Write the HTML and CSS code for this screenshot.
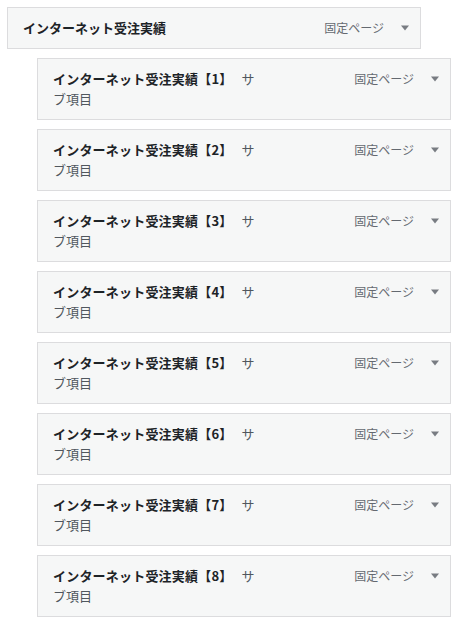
FILE: index.html
```html
<!DOCTYPE html>
<html lang="ja">
<head>
<meta charset="utf-8">
<title>メニュー</title>
<link rel="stylesheet" href="styles.css">
</head>
<body>
<ul class="menu">
  <li class="item">
    <div class="handle">
      <span class="title">インターネット受注実績</span>
      <span class="controls"><span class="type">固定ページ</span><span class="edit"><svg width="10" height="6" viewBox="0 0 10 6"><path d="M1 0.5h8L5 5.5z" fill="#787c82"/></svg></span></span>
    </div>
  </li>
  <li class="item sub">
    <div class="handle">
      <span class="title"><span class="name">インターネット受注実績【1】</span> <span class="is-sub">サブ項目</span></span>
      <span class="controls"><span class="type">固定ページ</span><span class="edit"><svg width="10" height="6" viewBox="0 0 10 6"><path d="M1 0.5h8L5 5.5z" fill="#787c82"/></svg></span></span>
    </div>
  </li>
  <li class="item sub">
    <div class="handle">
      <span class="title"><span class="name">インターネット受注実績【2】</span> <span class="is-sub">サブ項目</span></span>
      <span class="controls"><span class="type">固定ページ</span><span class="edit"><svg width="10" height="6" viewBox="0 0 10 6"><path d="M1 0.5h8L5 5.5z" fill="#787c82"/></svg></span></span>
    </div>
  </li>
  <li class="item sub">
    <div class="handle">
      <span class="title"><span class="name">インターネット受注実績【3】</span> <span class="is-sub">サブ項目</span></span>
      <span class="controls"><span class="type">固定ページ</span><span class="edit"><svg width="10" height="6" viewBox="0 0 10 6"><path d="M1 0.5h8L5 5.5z" fill="#787c82"/></svg></span></span>
    </div>
  </li>
  <li class="item sub">
    <div class="handle">
      <span class="title"><span class="name">インターネット受注実績【4】</span> <span class="is-sub">サブ項目</span></span>
      <span class="controls"><span class="type">固定ページ</span><span class="edit"><svg width="10" height="6" viewBox="0 0 10 6"><path d="M1 0.5h8L5 5.5z" fill="#787c82"/></svg></span></span>
    </div>
  </li>
  <li class="item sub">
    <div class="handle">
      <span class="title"><span class="name">インターネット受注実績【5】</span> <span class="is-sub">サブ項目</span></span>
      <span class="controls"><span class="type">固定ページ</span><span class="edit"><svg width="10" height="6" viewBox="0 0 10 6"><path d="M1 0.5h8L5 5.5z" fill="#787c82"/></svg></span></span>
    </div>
  </li>
  <li class="item sub">
    <div class="handle">
      <span class="title"><span class="name">インターネット受注実績【6】</span> <span class="is-sub">サブ項目</span></span>
      <span class="controls"><span class="type">固定ページ</span><span class="edit"><svg width="10" height="6" viewBox="0 0 10 6"><path d="M1 0.5h8L5 5.5z" fill="#787c82"/></svg></span></span>
    </div>
  </li>
  <li class="item sub">
    <div class="handle">
      <span class="title"><span class="name">インターネット受注実績【7】</span> <span class="is-sub">サブ項目</span></span>
      <span class="controls"><span class="type">固定ページ</span><span class="edit"><svg width="10" height="6" viewBox="0 0 10 6"><path d="M1 0.5h8L5 5.5z" fill="#787c82"/></svg></span></span>
    </div>
  </li>
  <li class="item sub">
    <div class="handle">
      <span class="title"><span class="name">インターネット受注実績【8】</span> <span class="is-sub">サブ項目</span></span>
      <span class="controls"><span class="type">固定ページ</span><span class="edit"><svg width="10" height="6" viewBox="0 0 10 6"><path d="M1 0.5h8L5 5.5z" fill="#787c82"/></svg></span></span>
    </div>
  </li>
</ul>
</body>
</html>
```

FILE: styles.css
```css
html, body {
  margin: 0;
  padding: 0;
  background: #fff;
}
body {
  padding: 7px;
  font-family: "Noto Sans CJK JP", "Noto Sans", sans-serif;
  color: #1d2327;
}
.menu {
  list-style: none;
  margin: 0;
  padding: 0;
  display: flex;
  flex-direction: column;
  gap: 9px;
}
.item.sub {
  margin-left: 30px;
}
.handle {
  box-sizing: border-box;
  width: 414px;
  border: 1px solid #dcdcde;
  background: #f6f7f7;
  padding: 10px 0 10px 15px;
  display: flex;
  align-items: flex-start;
}
.title {
  flex: 0 0 205px;
  font-size: 13px;
  font-weight: 700;
  line-height: 20px;
  color: #1d2327;
  word-break: break-all;
}
.name {
  letter-spacing: 0.2px;
}
.is-sub {
  font-weight: 400;
  color: #50575e;
  margin-left: 6px;
}
.controls {
  flex: 1;
  display: flex;
  justify-content: flex-end;
  align-items: center;
  margin-top: 1px;
}
.type {
  font-size: 12px;
  line-height: 18px;
  color: #646970;
  margin-right: 6px;
}
.edit {
  width: 30px;
  height: 18px;
  display: flex;
  align-items: center;
  justify-content: center;
}
.edit svg {
  display: block;
}
```
